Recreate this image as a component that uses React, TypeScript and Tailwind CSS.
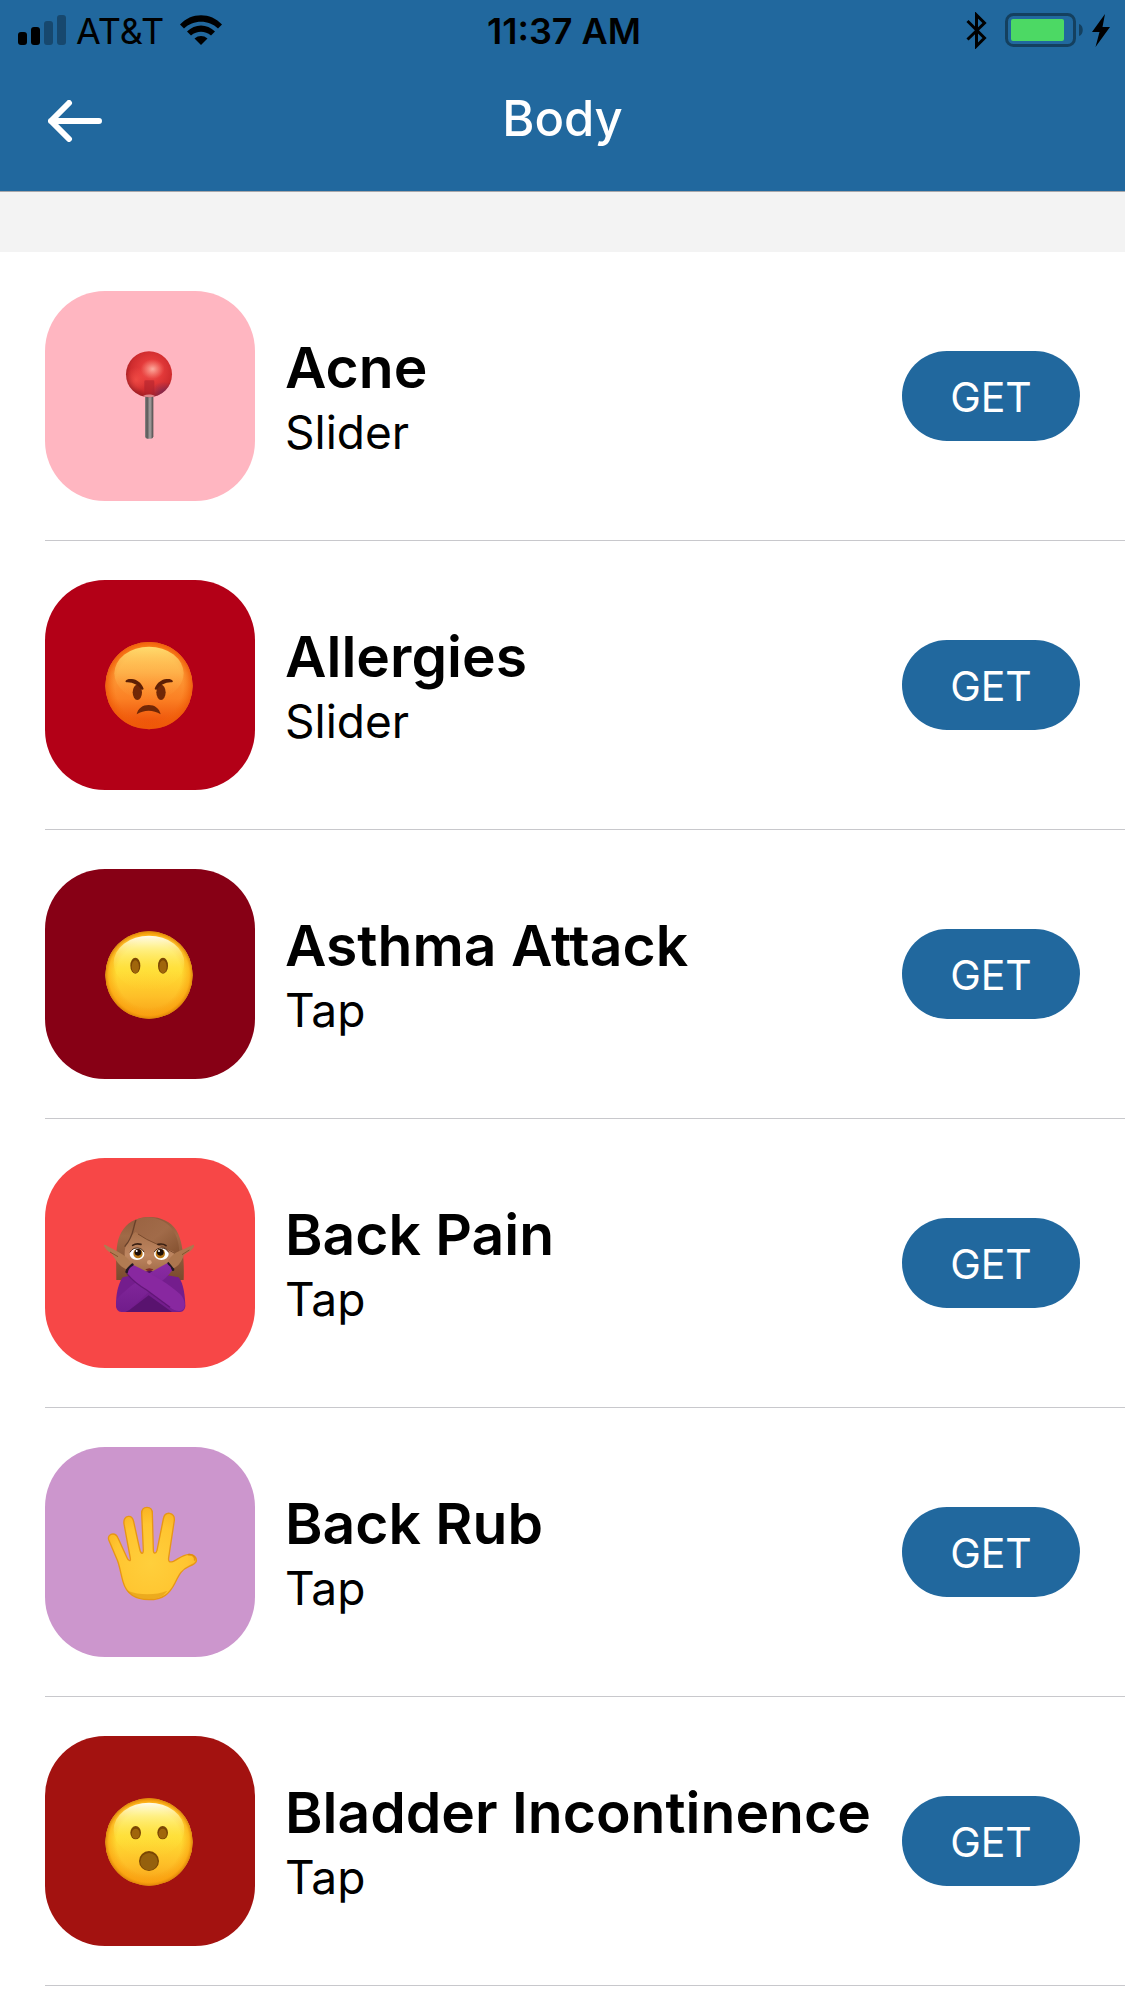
import React from 'react';

const Pushpin = () => (
  <svg viewBox="0 0 360 390" className="w-[120px] h-[130px]" aria-hidden="true">
    <defs>
      <linearGradient id="pin-stick" x1="0" x2="1" y1="0" y2="0">
        <stop offset="0" stopColor="#8f8686" />
        <stop offset="0.25" stopColor="#555" />
        <stop offset="0.6" stopColor="#a9a3a3" />
        <stop offset="1" stopColor="#4a4646" />
      </linearGradient>
      <radialGradient id="pin-ball" cx="0.55" cy="0.42" r="0.6">
        <stop offset="0" stopColor="#f0605a" />
        <stop offset="0.4" stopColor="#e43a3a" />
        <stop offset="0.75" stopColor="#cf2c2e" />
        <stop offset="1" stopColor="#9a1c22" />
      </radialGradient>
      <radialGradient id="pin-shine">
        <stop offset="0" stopColor="#ffc0b2" stopOpacity="0.8" />
        <stop offset="1" stopColor="#ff8a7a" stopOpacity="0" />
      </radialGradient>
      <radialGradient id="pin-shade">
        <stop offset="0" stopColor="#6a2a60" stopOpacity="0.7" />
        <stop offset="1" stopColor="#6a2a60" stopOpacity="0" />
      </radialGradient>
      <radialGradient id="pin-glow">
        <stop offset="0" stopColor="#ff5a50" stopOpacity="0.6" />
        <stop offset="1" stopColor="#ff5a50" stopOpacity="0" />
      </radialGradient>
      <clipPath id="pin-clip">
        <circle cx="177" cy="130" r="69" />
      </clipPath>
    </defs>
    <rect x="165" y="190" width="25" height="133" rx="7" fill="url(#pin-stick)" />
    <circle cx="177" cy="130" r="69" fill="url(#pin-ball)" />
    <g clipPath="url(#pin-clip)">
      <ellipse cx="222" cy="186" rx="42" ry="34" fill="url(#pin-shade)" />
      <ellipse cx="138" cy="146" rx="34" ry="38" fill="url(#pin-glow)" />
      <rect x="163" y="148" width="30" height="45" rx="4" fill="#a8202c" opacity="0.5" />
      <ellipse cx="188" cy="114" rx="36" ry="30" fill="url(#pin-shine)" />
      <path d="M160 194c10-5 24-5 34 0l-4 8h-26z" fill="#e9a0a4" opacity="0.8" />
    </g>
  </svg>
);

const YellowHead = ({ id }: { id: string }) => (
  <>
    <defs>
      <linearGradient id={`${id}-base`} x1="0" x2="0" y1="0" y2="1">
        <stop offset="0" stopColor="#ffb411" />
        <stop offset="0.12" stopColor="#ffe24e" />
        <stop offset="0.45" stopColor="#ffdd34" />
        <stop offset="0.75" stopColor="#febf28" />
        <stop offset="1" stopColor="#f8a015" />
      </linearGradient>
      <radialGradient id={`${id}-rim`} cx="0.5" cy="0.5" r="0.5">
        <stop offset="0.74" stopColor="#f79a0a" stopOpacity="0" />
        <stop offset="0.92" stopColor="#fb9e0a" stopOpacity="0.55" />
        <stop offset="1" stopColor="#dc8208" stopOpacity="0.95" />
      </radialGradient>
      <linearGradient id={`${id}-shine`} x1="0" x2="0" y1="0" y2="1">
        <stop offset="0" stopColor="#fffdf0" />
        <stop offset="0.25" stopColor="#fff69c" stopOpacity="0.7" />
        <stop offset="0.6" stopColor="#ffe94e" stopOpacity="0.25" />
        <stop offset="1" stopColor="#ffe23c" stopOpacity="0" />
      </linearGradient>
    </defs>
    <circle cx="177" cy="198" r="131" fill={`url(#${id}-base)`} />
    <circle cx="177" cy="198" r="131" fill={`url(#${id}-rim)`} />
    <ellipse cx="177" cy="162" rx="106" ry="82" fill={`url(#${id}-shine)`} />
  </>
);

const AngryFace = () => (
  <svg viewBox="0 0 360 390" className="w-[120px] h-[130px]" aria-hidden="true">
    <defs>
      <linearGradient id="angry-base" x1="0" x2="0" y1="0" y2="1">
        <stop offset="0" stopColor="#ff8a1c" />
        <stop offset="0.35" stopColor="#fd9c38" />
        <stop offset="0.65" stopColor="#fb8024" />
        <stop offset="1" stopColor="#ea4602" />
      </linearGradient>
      <radialGradient id="angry-rim">
        <stop offset="0.78" stopColor="#f56a0c" stopOpacity="0" />
        <stop offset="1" stopColor="#ee5a0a" stopOpacity="0.9" />
      </radialGradient>
      <linearGradient id="angry-shine" x1="0" x2="0" y1="0" y2="1">
        <stop offset="0" stopColor="#ffdc6e" />
        <stop offset="0.4" stopColor="#ffcb60" stopOpacity="0.6" />
        <stop offset="1" stopColor="#ff9a38" stopOpacity="0" />
      </linearGradient>
    </defs>
    <circle cx="177" cy="197" r="131" fill="url(#angry-base)" />
    <circle cx="177" cy="197" r="131" fill="url(#angry-rim)" />
    <ellipse cx="177" cy="160" rx="104" ry="80" fill="url(#angry-shine)" />
    <ellipse cx="142" cy="217" rx="14" ry="23" fill="#712706" />
    <ellipse cx="213" cy="217" rx="14" ry="23" fill="#712706" />
    <path d="M107 182c4-6 14-6 24-4 15 4 26 15 30 29-3 4-7 2-9-1-8-11-22-18-39-19-5 0-8-2-6-5z" fill="#5c1f05" />
    <path d="M248 182c-4-6-14-6-24-4-15 4-26 15-30 29 3 4 7 2 9-1 8-11 22-18 39-19 5 0 8-2 6-5z" fill="#5c1f05" />
    <path d="M140 283c4-18 18-28 36-28s32 10 36 28c-22-14-50-14-72 0z" fill="#712706" />
  </svg>
);

const NoMouthFace = () => (
  <svg viewBox="0 0 360 390" className="w-[120px] h-[130px]" aria-hidden="true">
    <YellowHead id="mute" />
    <ellipse cx="136" cy="170" rx="15" ry="24" fill="#7a4503" />
    <ellipse cx="136" cy="173" rx="11" ry="19" fill="#a0660b" />
    <ellipse cx="219" cy="170" rx="15" ry="24" fill="#7a4503" />
    <ellipse cx="219" cy="173" rx="11" ry="19" fill="#a0660b" />
  </svg>
);

const OpenMouthFace = () => (
  <svg viewBox="0 0 360 390" className="w-[120px] h-[130px]" aria-hidden="true">
    <YellowHead id="hushed" />
    <ellipse cx="137" cy="170" rx="16" ry="20" fill="#7a4503" />
    <ellipse cx="137" cy="173" rx="12" ry="15" fill="#a0660b" />
    <ellipse cx="218" cy="170" rx="16" ry="20" fill="#7a4503" />
    <ellipse cx="218" cy="173" rx="12" ry="15" fill="#a0660b" />
    <circle cx="177" cy="255" r="30" fill="#7a4503" />
    <circle cx="177" cy="257" r="26" fill="#95600d" />
  </svg>
);

const CrossedArms = () => (
  <svg viewBox="0 -6 360 390" className="w-[120px] h-[130px]" aria-hidden="true">
    <defs>
      <linearGradient id="arms-hair" x1="0" x2="0" y1="0" y2="1">
        <stop offset="0" stopColor="#8d5a3b" />
        <stop offset="0.3" stopColor="#a06a47" />
        <stop offset="1" stopColor="#7a4a2d" />
      </linearGradient>
      <linearGradient id="arms-fringe" x1="0" x2="1" y1="0" y2="1">
        <stop offset="0" stopColor="#9a6342" />
        <stop offset="0.5" stopColor="#a16b49" />
        <stop offset="1" stopColor="#83502f" />
      </linearGradient>
      <linearGradient id="arms-skin" x1="0" x2="0" y1="0" y2="1">
        <stop offset="0" stopColor="#a8714c" />
        <stop offset="0.5" stopColor="#bd8560" />
        <stop offset="1" stopColor="#98623f" />
      </linearGradient>
      <linearGradient id="arms-sleeve" x1="0" x2="0" y1="0" y2="1">
        <stop offset="0" stopColor="#8a2ba3" />
        <stop offset="1" stopColor="#711d8c" />
      </linearGradient>
    </defs>
    {/* hair and face */}
    <path d="M79 240c0-60-6-120 22-154 18-23 45-35 78-35s64 14 80 40c20 32 24 90 22 149z" fill="url(#arms-hair)" />
    <path d="M104 166c-1-30 10-54 36-72 32 28 68 40 112 60 2 50-30 84-74 84s-74-32-74-72z" fill="url(#arms-skin)" />
    <path d="M138 60c-8 14-8 30 6 42 32 24 78 34 124 64 2-56-24-108-90-114-16-1-30 2-40 8z" fill="url(#arms-fringe)" />
    <path d="M138 60c-10 22-4 46-34 80" fill="none" stroke="#68402a" strokeWidth="4" />
    <path d="M144 102c32 24 74 34 110 58" fill="none" stroke="#7a4b2d" strokeWidth="3" />
    {/* eyes */}
    <path d="M128 136c6-4 16-5 25-3M204 133c9-2 18-1 24 4" fill="none" stroke="#3a2013" strokeWidth="5" strokeLinecap="round" />
    <ellipse cx="141" cy="162" rx="22" ry="18" fill="#fff" />
    <ellipse cx="214" cy="162" rx="22" ry="18" fill="#fff" />
    <circle cx="144" cy="161" r="14" fill="#b8761a" />
    <circle cx="211" cy="161" r="14" fill="#b8761a" />
    <circle cx="144" cy="157" r="10" fill="#1a0d08" />
    <circle cx="211" cy="157" r="10" fill="#1a0d08" />
    <circle cx="140" cy="153" r="3" fill="#fff" />
    <circle cx="207" cy="153" r="3" fill="#fff" />
    <path d="M120 157c5-9 12-13 21-13s17 4 21 12M193 156c4-8 12-12 21-12s17 4 22 13" fill="none" stroke="#4a2a18" strokeWidth="3" />
    <circle cx="178" cy="187" r="7" fill="#d9a27c" />
    <path d="M166 208c6 8 18 8 24 0l-12-3z" fill="#7d2c24" />
    {/* body and arms */}
    <path d="M98 232l46-10h68l54 10c16 20 19 60 20 84 0 12-6 20-16 20H94c-10 0-16-8-16-20 0-28 4-60 20-84z" fill="#741d8d" />
    <path d="M118 330l58-44 70 50H106z" fill="#4f0f62" opacity="0.7" />
    <path d="M150 218l30-6 28 6-30 24z" fill="#4f0f62" />
    <path d="M234 188c9 3 15 10 15 20-12 18-28 32-46 44l-70 62c-16 18-36 22-49 14-9-8-8-26 2-36 38-40 94-76 148-104z" fill="url(#arms-sleeve)" />
    <path d="M128 194c-11 5-17 14-18 24 16 22 34 38 56 50l74 54c16 14 34 14 42 4 6-12 0-34-12-44-46-40-92-64-142-88z" fill="#8828a0" />
    <path d="M110 220c18 22 36 36 60 50l70 52" fill="none" stroke="#55106a" strokeWidth="4" opacity="0.7" />
    <path d="M236 190c6 4 12 11 13 19" fill="none" stroke="#221726" strokeWidth="8" strokeLinecap="round" />
    <path d="M127 194c-9 5-16 13-17 22" fill="none" stroke="#221726" strokeWidth="8" strokeLinecap="round" />
    {/* hands */}
    <path d="M125 190c-10-12-16-20-26-26-18-11-38-20-52-29-6-3-6 2-3 6 4 8 12 14 20 19 12 18 22 38 44 48z" fill="#b17b52" />
    <path d="M234 184c8-14 16-22 26-27 14-7 34-15 48-22 6-2 5 4 2 8-8 12-20 14-29 24-6 16-14 30-30 38z" fill="#ad764e" />
    <path d="M60 156l24 14M298 150l-22 14" stroke="#85522f" strokeWidth="3" />
  </svg>
);

const RaisedHand = () => (
  <svg viewBox="0 -9 360 390" className="w-[120px] h-[130px]" aria-hidden="true">
    <defs>
      <radialGradient id="hand-skin" cx="0.48" cy="0.6" r="0.6">
        <stop offset="0" stopColor="#ffcf3c" />
        <stop offset="0.7" stopColor="#ffc530" />
        <stop offset="1" stopColor="#f9b324" />
      </radialGradient>
    </defs>
    <path
      d="M56 149c-3-10 4-17 13-17 8 0 12 5 15 12l27 59c3 8 12 14 10 2l-19-103c-2-14 4-22 13-23 10-1 14 6 16 16l18 82c3 15 11 18 11 3l-5-110c0-12 6-18 16-18s16 6 16 18l3 110c0 12 8 12 11 1l19-94c2-12 9-18 19-17 10 2 15 9 14 21l-17 112c-2 13 4 15 14 11 16-8 28-20 48-21 14 0 23 10 21 20-2 8-12 12-22 16-24 10-32 30-42 50-16 32-36 50-78 50-44 0-68-18-78-54-6-20-9-42-16-62z"
      fill="url(#hand-skin)"
      stroke="#e79616"
      strokeWidth="4"
      strokeLinejoin="round"
    />
    <path d="M112 302c18 20 36 25 64 25s44-8 56-25c-34 14-84 14-120 0z" fill="#dd930f" opacity="0.55" />
    <path d="M296 194c12-1 20 7 18 16" fill="none" stroke="#d9850f" strokeWidth="5" strokeLinecap="round" opacity="0.7" />
  </svg>
);

const trackers = [
  { name: 'Acne', type: 'Slider', color: 'bg-[#ffb6c1]', Icon: Pushpin },
  { name: 'Allergies', type: 'Slider', color: 'bg-[#b30017]', Icon: AngryFace },
  { name: 'Asthma Attack', type: 'Tap', color: 'bg-[#870015]', Icon: NoMouthFace },
  { name: 'Back Pain', type: 'Tap', color: 'bg-[#f74747]', Icon: CrossedArms },
  { name: 'Back Rub', type: 'Tap', color: 'bg-[#cc96cd]', Icon: RaisedHand },
  { name: 'Bladder Incontinence', type: 'Tap', color: 'bg-[#a31210]', Icon: OpenMouthFace },
];

const StatusBar = () => (
  <div className="grid grid-cols-[1fr_auto_1fr] items-center h-[60px] pl-[18px] pr-[15px] text-black">
    <div className="flex items-center">
      <svg viewBox="0 0 48 30" className="w-[48px] h-[30px]" aria-label="Signal strength">
        <rect x="0" y="17" width="9" height="13" rx="3" />
        <rect x="13" y="12" width="9" height="18" rx="3" />
        <rect x="26" y="6" width="9" height="24" rx="3" opacity="0.3" />
        <rect x="39" y="0" width="9" height="30" rx="3" opacity="0.3" />
      </svg>
      <span className="ml-[10px] pt-[2px] text-[36px] leading-[42px]">AT&amp;T</span>
      <svg viewBox="0 0 42 30" className="ml-[16px] w-[42px] h-[30px]" aria-label="Wi-Fi">
        <path d="M0 9.500C11-3 31-3 42 9.500L38 13.500C29 4.500 13 4.500 4 13.500Z" />
        <path d="M7 16.500C15 8.500 27 8.500 35 16.500L31 20.500C25 15.500 17 15.500 11 20.500Z" />
        <path d="M14.500 23.500C18.500 20.200 23.500 20.200 27.500 23.500L21 30Z" />
      </svg>
    </div>
    <span className="pt-[2px] text-[36px] leading-[42px] font-semibold">11:37 AM</span>
    <div className="flex items-center justify-end">
      <svg viewBox="0 0 21 37" className="w-[21px] h-[37px]" aria-label="Bluetooth">
        <path d="M1.500 9L18.500 26L10.500 34V3L18.500 11L1.500 27.500" fill="none" stroke="#000" strokeWidth="3" />
      </svg>
      <svg viewBox="0 0 78 34" className="ml-[18px] w-[78px] h-[34px]" aria-label="Battery">
        <rect x="1.500" y="1.500" width="68" height="31" rx="7" fill="none" stroke="#14405f" strokeWidth="3" />
        <rect x="6" y="6" width="53" height="22" rx="2" fill="#4cd964" />
        <path d="M74 11c5 1 5 11 0 12z" fill="#14405f" />
      </svg>
      <svg viewBox="0 0 18 33" className="ml-[9px] w-[18px] h-[33px]" aria-label="Charging">
        <path d="M13 0L0 18H7.500L3.500 33L18 13H10.500Z" />
      </svg>
    </div>
  </div>
);

const App = () => {
  return (
    <div className="min-h-screen bg-white text-black font-[Inter,Roboto,sans-serif]">
      {/* Header */}
      <header className="bg-[#21689e] border-b border-[#a7a7aa]">
        <StatusBar />
        <div className="grid grid-cols-[1fr_auto_1fr] items-center h-[131px] pb-[9px] px-[45px]">
          <button type="button" aria-label="Back" className="justify-self-start p-[3px]">
            <svg viewBox="0 0 54 42" className="block w-[54px] h-[42px]" aria-hidden="true">
              <path d="M51 21H3M21 3L3 21L21 39" fill="none" stroke="#fff" strokeWidth="6" strokeLinecap="round" strokeLinejoin="round" />
            </svg>
          </button>
          <h1 className="pb-[4px] text-[49px] leading-[60px] font-medium text-white">Body</h1>
        </div>
      </header>

      <div className="h-[60px] bg-[#f3f3f3]"></div>

      {/* Tracker list */}
      <ul className="pl-[45px]">
        {trackers.map(({ name, type, color, Icon }) => (
          <li key={name} className="flex items-center py-[39px] pr-[45px] border-b border-[#c8c8cc]">
            <div className={`flex items-center justify-center shrink-0 w-[210px] h-[210px] rounded-[60px] ${color}`}>
              <Icon />
            </div>
            <div className="flex-1 min-w-0 ml-[30px] pt-[4px] whitespace-nowrap">
              <h2 className="text-[57px] leading-[68px] font-semibold">{name}</h2>
              <p className="text-[46px] leading-[60px]">{type}</p>
            </div>
            <button type="button" className="shrink-0 w-[178px] h-[90px] pt-[2px] rounded-full bg-[#21689e] text-[41px] leading-[50px] text-white">
              GET
            </button>
          </li>
        ))}
      </ul>
    </div>
  );
};

export default App;
